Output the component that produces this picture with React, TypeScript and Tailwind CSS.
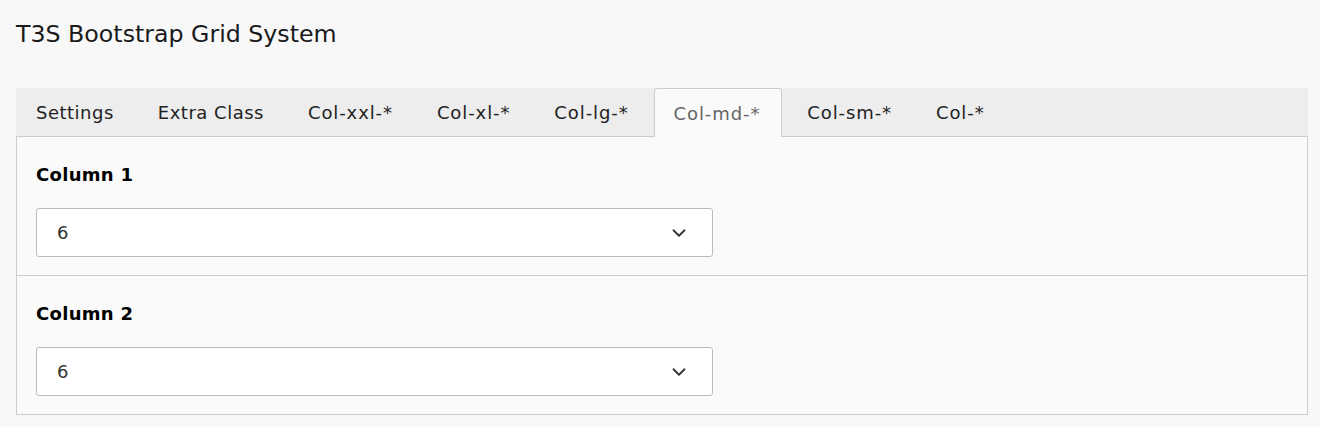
import { ChevronDown } from 'lucide-react';

const tabs = ['Settings', 'Extra Class', 'Col-xxl-*', 'Col-xl-*', 'Col-lg-*', 'Col-md-*', 'Col-sm-*', 'Col-*'];
const active = 'Col-md-*';

const columns = [
    { label: 'Column 1', value: '6' },
    { label: 'Column 2', value: '6' },
];

const App = () => {
    return (
        <div className="min-h-[427px] bg-[#f8f8f8] font-['DejaVu_Sans',Verdana,sans-serif] text-[#1a1a1a]">
            <h1 className="pl-4 pt-[18px] text-[23.7px] leading-[32px] text-[#1a1a1a]">T3S Bootstrap Grid System</h1>

            <div className="ml-4 mt-[38px] w-[1292px]">
                <div className="flex h-[49px] rounded-t-[3px] bg-[#ededed] border-b border-[#cccccc]">
                    {tabs.map((tab, i) => (
                        <div
                            key={tab}
                            className={
                                tab === active
                                    ? 'relative -mb-px mx-[3px] flex h-[49px] items-center rounded-t-[3px] border border-b-0 border-[#cccccc] bg-[#fafafa] pl-[19px] pr-[21px] text-[18px] tracking-[0.9px] text-[#666666]'
                                    : i === 0
                                      ? 'flex items-center pl-5 pr-[22px] text-[18px] tracking-[0.5px] text-[#222222]'
                                      : i === 1
                                        ? 'flex items-center px-[22px] text-[18px] tracking-[0.5px] text-[#222222]'
                                        : 'flex items-center px-[22px] text-[18px] tracking-[0.9px] text-[#222222]'
                            }
                        >
                            {tab}
                        </div>
                    ))}
                </div>

                <div className="border border-t-0 border-[#cccccc] bg-[#fafafa]">
                    {columns.map((col, i) => (
                        <div key={col.label} className={i > 0 ? 'border-t border-[#cccccc] pl-[19px] pr-5 pt-[26px] pb-[18px]' : 'pl-[19px] pr-5 pt-[26px] pb-[18px]'}>
                            <div className="mb-[21px] text-[18px] font-bold leading-[24px] tracking-[0.3px] text-black">{col.label}</div>
                            <div className="flex h-[49px] w-[677px] items-center justify-between rounded-[3px] border border-[#bbbbbb] bg-white pl-5 pr-[22px] text-[18px] text-[#333333]">
                                <span>{col.value}</span>
                                <ChevronDown size={22} strokeWidth={2} className="text-[#333333]" />
                            </div>
                        </div>
                    ))}
                </div>
            </div>
        </div>
    );
};

export default App;
